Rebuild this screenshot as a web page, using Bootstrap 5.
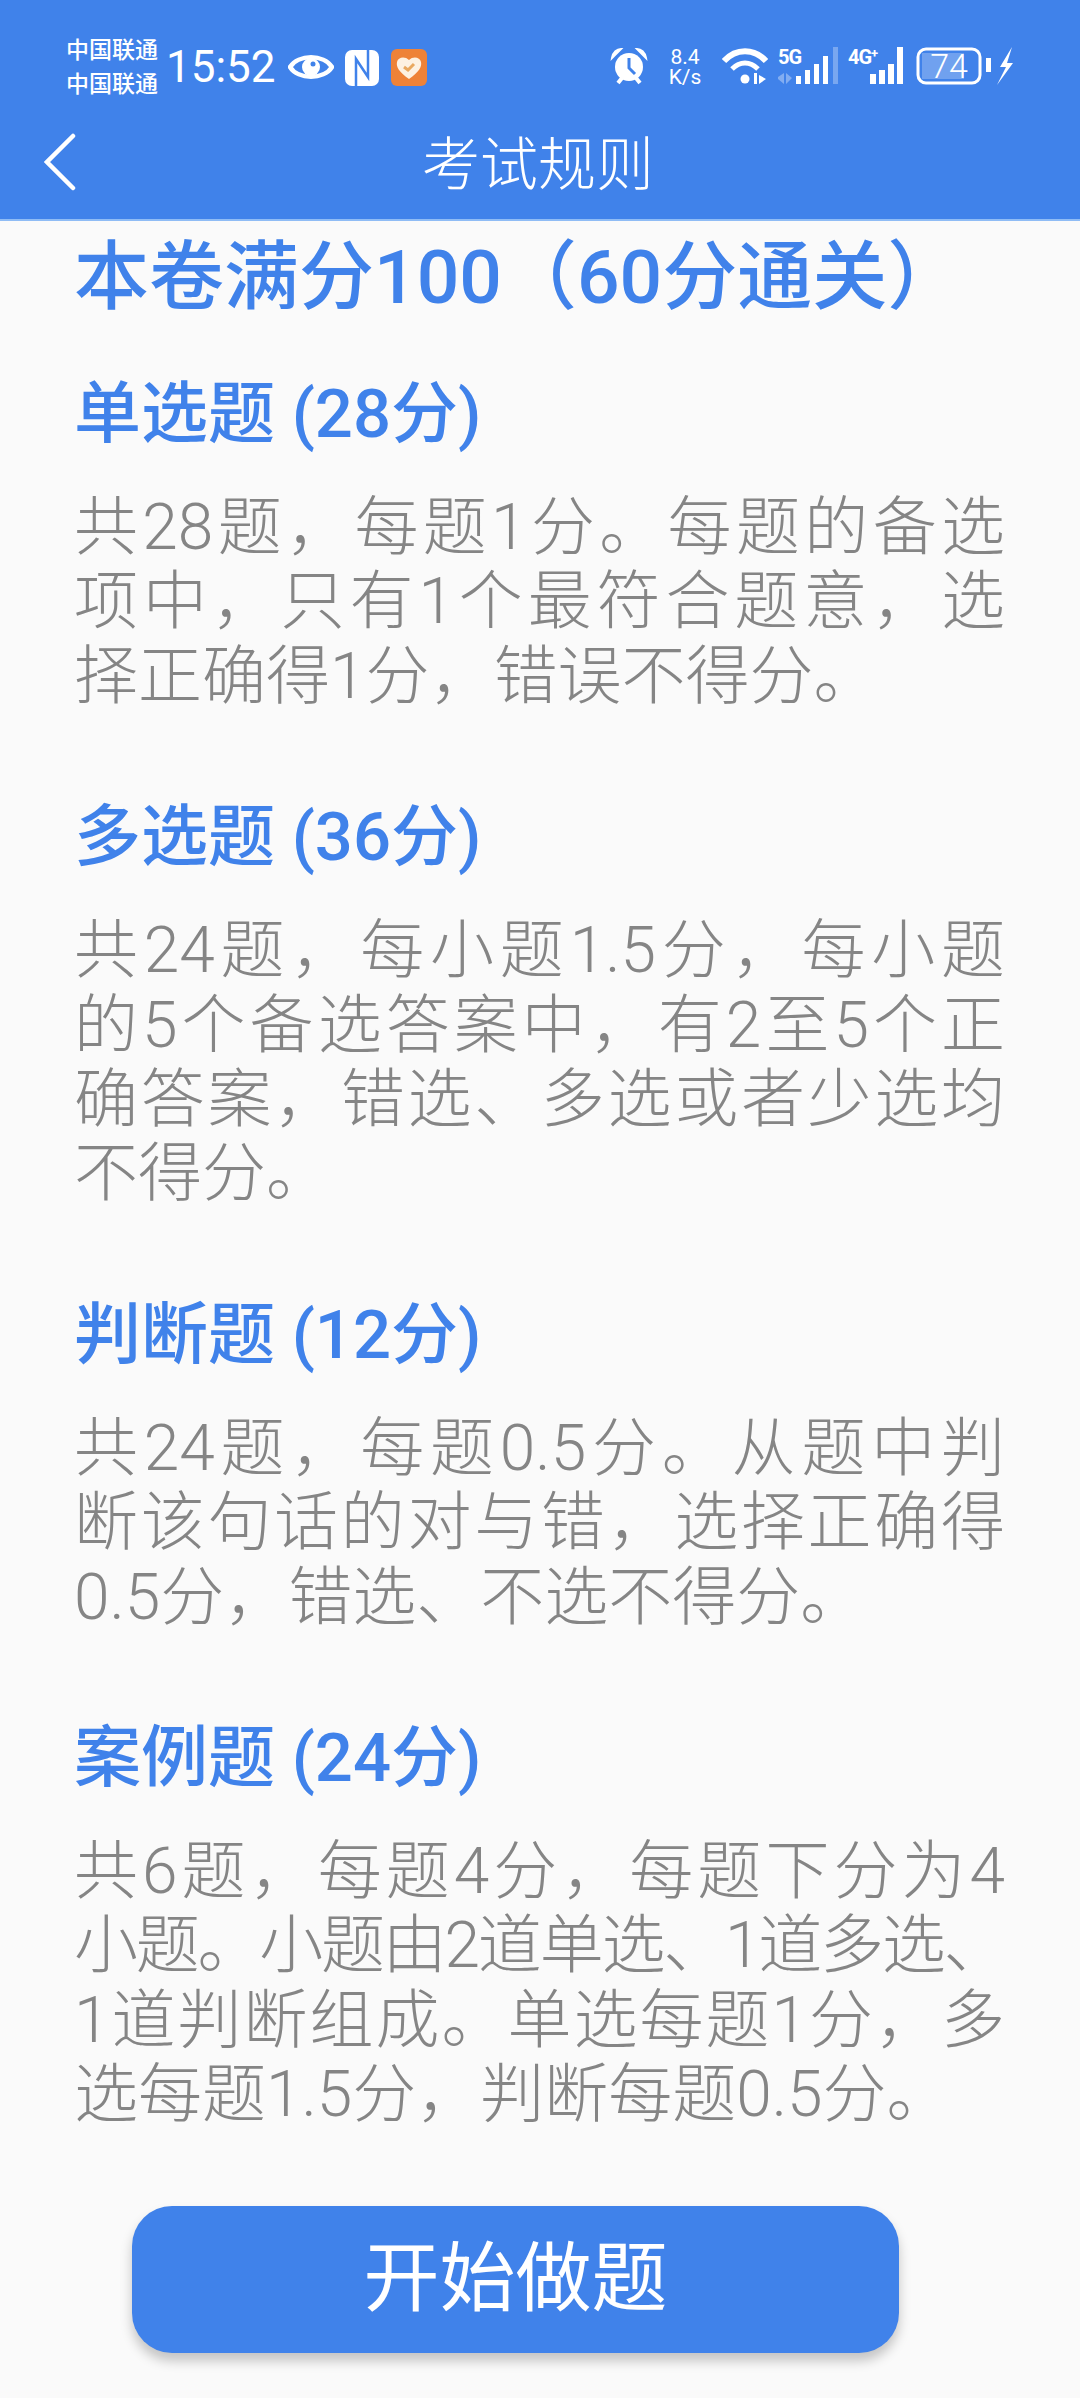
<!DOCTYPE html>
<html lang="zh-CN">
<head>
  <meta charset="UTF-8" />
  <meta name="viewport" content="width=device-width, initial-scale=1.0" />
  <title>考试规则</title>
  <link href="https://cdn.jsdelivr.net/npm/bootstrap@5.3.0/dist/css/bootstrap.min.css" rel="stylesheet" />
  <style>
    body {
      width: 1080px;
      height: 2398px;
      overflow: hidden;
      background-color: #fafafa;
      font-family: Roboto, "Noto Sans CJK SC", sans-serif;
    }
    .top-area {
      height: 221px;
      background-color: #4082ea;
      border-bottom: 2px solid #8fbcf5;
      color: #fff;
    }
    .status-row {
      height: 103px;
      padding: 47px 66px 0 66px;
    }
    .carrier {
      margin-top: -13px;
      font-size: 23px;
      line-height: 34px;
      width: 100px;
      font-weight: 500;
    }
    .clock {
      font-size: 44px;
      line-height: 40px;
      width: 122px;
    }
    .gap-nfc { margin: 3px 0 0 11px; }
    .gap-app { margin: 2px 0 0 12px; }
    .gap-speed { margin-left: 17px; }
    .gap-net { margin-left: 10px; }
    .gap-sim { margin-left: 8px; }
    .speed {
      font-size: 21px;
      line-height: 20px;
      width: 40px;
      text-align: center;
    }
    .net-icon {
      width: 62px;
      height: 38px;
    }
    .net-tag {
      font-size: 20px;
      line-height: 20px;
      font-weight: 700;
      letter-spacing: -1px;
    }
    .net-tag sup {
      font-size: 13px;
      top: -6px;
    }
    .batt-icon {
      width: 66px;
      height: 38px;
      margin-left: 6px;
    }
    .batt-num {
      font-size: 34px;
      line-height: 38px;
      font-weight: 300;
    }
    .nav-row {
      height: 118px;
      padding-left: 44px;
    }
    .nav-title {
      margin: 6px 0 0 346px;
      font-size: 58px;
      font-weight: 300;
      line-height: 72px;
    }
    .paper-title {
      margin: 0;
      padding: 18px 0 0 74px;
      font-size: 75px;
      line-height: 76px;
      font-weight: 500;
      color: #4082ea;
    }
    .rule-block {
      margin-top: 85px;
      padding: 0 75px 0 74px;
    }
    .rule-first { margin-top: 61px; }
    .rule-head {
      margin: 0;
      font-size: 67px;
      line-height: 76px;
      font-weight: 500;
      color: #4082ea;
    }
    .rule-text {
      margin: 39px 0 0 0;
      font-size: 64px;
      line-height: 74.4px;
      font-weight: 300;
      color: #858585;
    }
    .rule-line {
      display: block;
      white-space: nowrap;
      text-align: justify;
      text-align-last: justify;
    }
    .rule-line.tight { letter-spacing: -2.5px; }
    .rule-line.end { text-align-last: left; }
    .start-btn {
      display: block;
      width: 767px;
      height: 147px;
      margin: 73px 0 0 132px;
      border-radius: 40px;
      background-color: #4082ea;
      border: 0;
      color: #fff;
      font-size: 76px;
      box-shadow: 0 8px 12px rgba(0, 0, 0, 0.22);
    }
    .start-btn:hover { background-color: #4082ea; color: #fff; }
  </style>
</head>
<body>
  <div class="top-area">
    <div class="status-row d-flex align-items-start">
      <div class="carrier">中国联通<br>中国联通</div>
      <div class="clock">15:52</div>
      <!-- 左侧状态图标 -->
      <svg width="46" height="38" viewBox="0 0 46 38"><path d="M2 20C10 7 36 7 44 20C36 33 10 33 2 20Z" fill="none" stroke="#fff" stroke-width="4.5"/><circle cx="23" cy="20" r="9" fill="#fff"/><circle cx="25" cy="17" r="2.5" fill="#4082ea"/></svg>
      <svg class="gap-nfc" width="34" height="36" viewBox="0 0 34 36"><rect width="34" height="36" rx="7" fill="#fff"/><path d="M11 36V9L23 27V0" fill="none" stroke="#4082ea" stroke-width="2.5"/></svg>
      <svg class="gap-app" width="36" height="37" viewBox="0 0 36 37"><rect width="36" height="37" rx="6" fill="#ee8238"/><path d="M18 30C8 23 5 18 6 13C7 8 14 7 18 11C22 7 29 8 30 13C31 18 28 23 18 30Z" fill="#fdf1e2"/><path d="M13 18L17 21L23 15" fill="none" stroke="#e9a860" stroke-width="3"/></svg>
      <!-- 右侧状态图标 -->
      <div class="ms-auto d-flex align-items-start">
        <svg width="38" height="38" viewBox="0 0 38 38"><circle cx="19" cy="20" r="14" fill="#fff"/><path d="M19 11V21L25 27" fill="none" stroke="#4082ea" stroke-width="3"/><path d="M2 11C3 5 7 2 11 2ZM36 11C35 5 31 2 27 2Z" fill="#fff" stroke="#fff" stroke-width="2"/><path d="M8 36L12 31M30 36L26 31" stroke="#fff" stroke-width="4"/></svg>
        <div class="speed gap-speed">8.4<br>K/s</div>
        <svg class="gap-speed" width="46" height="38" viewBox="0 0 46 38"><path d="M2 14C14 1 32 1 44 14" fill="none" stroke="#fff" stroke-width="6"/><path d="M10 22C18 14 28 14 36 22" fill="none" stroke="#fff" stroke-width="5"/><circle cx="23" cy="32" r="4.5" fill="#fff"/><path d="M32 26V37H35V26ZM37 28V37L44 32Z" fill="#fff"/></svg>
        <div class="net-icon gap-net position-relative">
          <span class="net-tag position-absolute top-0 start-0">5G</span>
          <svg class="position-absolute top-0 start-0" width="62" height="38" viewBox="0 0 62 38"><path d="M0 30L6 26V37L0 32ZM8 26V37L14 31Z" fill="#fff" opacity=".35"/><path d="M18 29h5v8h-5zM27 23h5v14h-5zM36 17h5v20h-5zM45 9h5v28h-5z" fill="#fff"/><path d="M55 0h5v37h-5z" fill="#fff" opacity=".3"/></svg>
        </div>
        <div class="net-icon gap-sim position-relative">
          <span class="net-tag position-absolute top-0 start-0">4G<sup>+</sup></span>
          <svg class="position-absolute top-0 start-0" width="62" height="38" viewBox="0 0 62 38"><path d="M22 27h6v10h-6zM31 23h6v14h-6zM40 17h6v20h-6zM49 0h6v37h-6z" fill="#fff"/></svg>
        </div>
        <div class="batt-icon position-relative">
          <svg class="position-absolute top-0 start-0" width="66" height="38" viewBox="0 0 66 38"><rect x="2" y="2" width="62" height="34" rx="8" fill="none" stroke="#fff" stroke-width="3"/><rect x="6" y="6" width="42" height="26" fill="#fff" opacity=".25"/></svg>
          <div class="batt-num position-absolute top-0 start-0 w-100 text-center">74</div>
        </div>
        <svg width="28" height="38" viewBox="0 0 28 38" class="ms-1"><path d="M0 11h5v14H0z" fill="#fff"/><path d="M26 0L14 20H20L11 38L27 16H21Z" fill="#fff"/></svg>
      </div>
    </div>
    <div class="nav-row d-flex align-items-center">
      <svg width="32" height="58" viewBox="0 0 32 58"><path d="M29 3L3 29L29 55" fill="none" stroke="#fff" stroke-width="4.5" stroke-linecap="round"/></svg>
      <div class="nav-title">考试规则</div>
    </div>
  </div>

  <h1 class="paper-title">本卷满分100（60分通关）</h1>

  <div class="rule-block rule-first">
    <h2 class="rule-head">单选题 (28分)</h2>
    <p class="rule-text">
      <span class="rule-line">共28题，每题1分。每题的备选</span>
      <span class="rule-line">项中，只有1个最符合题意，选</span>
      <span class="rule-line end">择正确得1分，错误不得分。</span>
    </p>
  </div>
  <div class="rule-block">
    <h2 class="rule-head">多选题 (36分)</h2>
    <p class="rule-text">
      <span class="rule-line">共24题，每小题1.5分，每小题</span>
      <span class="rule-line">的5个备选答案中，有2至5个正</span>
      <span class="rule-line">确答案，错选、多选或者少选均</span>
      <span class="rule-line end">不得分。</span>
    </p>
  </div>
  <div class="rule-block">
    <h2 class="rule-head">判断题 (12分)</h2>
    <p class="rule-text">
      <span class="rule-line">共24题，每题0.5分。从题中判</span>
      <span class="rule-line">断该句话的对与错，选择正确得</span>
      <span class="rule-line end">0.5分，错选、不选不得分。</span>
    </p>
  </div>
  <div class="rule-block">
    <h2 class="rule-head">案例题 (24分)</h2>
    <p class="rule-text">
      <span class="rule-line">共6题，每题4分，每题下分为4</span>
      <span class="rule-line tight">小题。小题由2道单选、1道多选、</span>
      <span class="rule-line">1道判断组成。单选每题1分，多</span>
      <span class="rule-line end">选每题1.5分，判断每题0.5分。</span>
    </p>
  </div>

  <button type="button" class="btn start-btn">开始做题</button>

  <script src="https://cdn.jsdelivr.net/npm/bootstrap@5.3.0/dist/js/bootstrap.bundle.min.js"></script>
</body>
</html>
